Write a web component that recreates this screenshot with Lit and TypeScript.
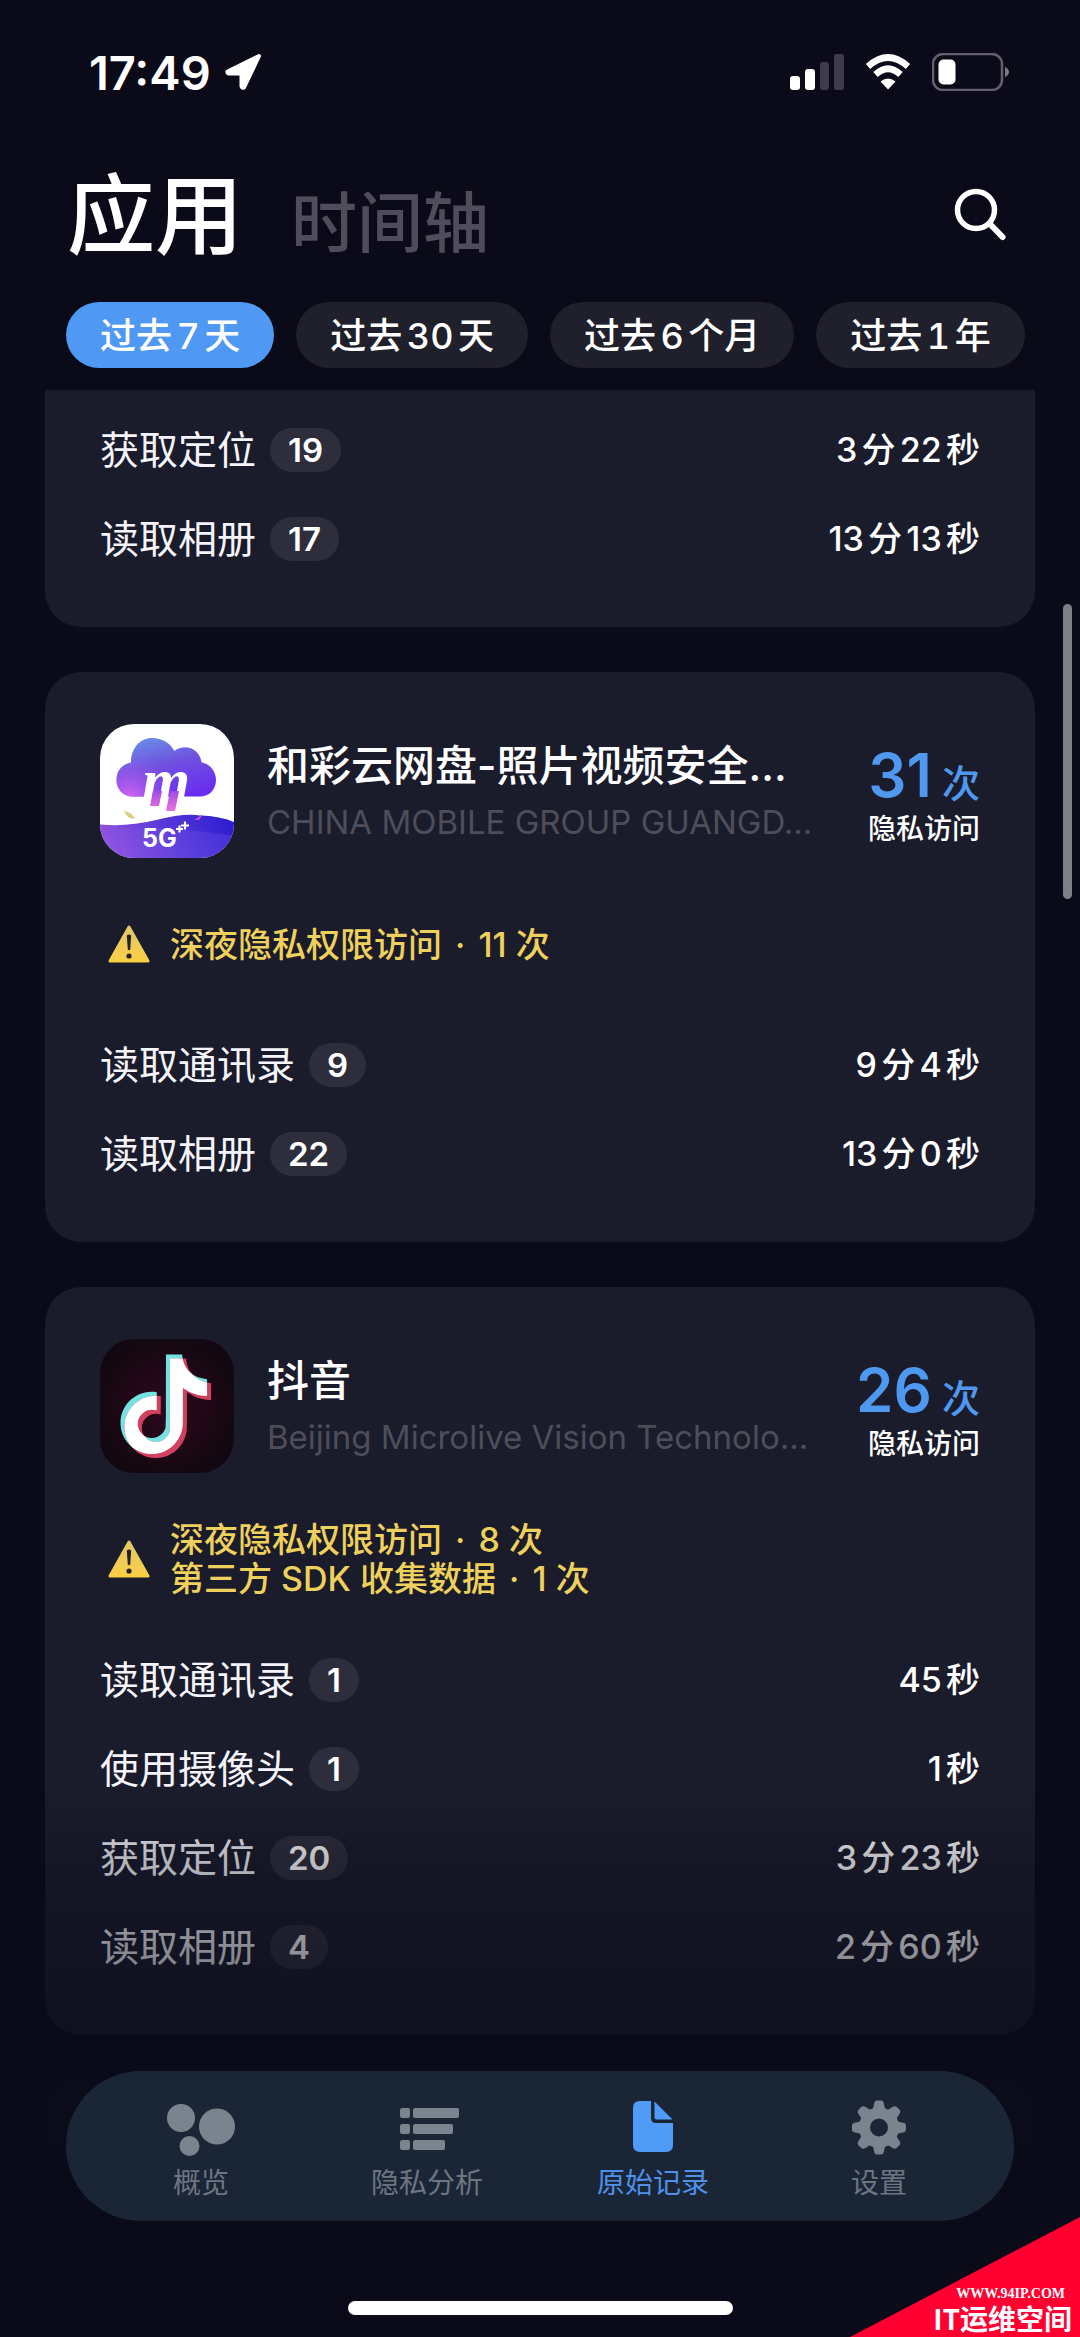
import { LitElement, html, svg, css, nothing } from "lit";
import { customElement, property, state } from "lit/decorators.js";
import { classMap } from "lit/directives/class-map.js";

interface Warning {
  text: string;
  times: number;
}

interface Access {
  name: string;
  count: number;
  time: string;
}

interface AppRecord {
  icon?: "cloud" | "note";
  name?: string;
  vendor?: string;
  total?: number;
  warnings: Warning[];
  accesses: Access[];
}

const PERIODS = ["过去7天", "过去30天", "过去6个月", "过去1年"];

const RECORDS: AppRecord[] = [
  {
    warnings: [],
    accesses: [
      { name: "获取定位", count: 19, time: "3分22秒" },
      { name: "读取相册", count: 17, time: "13分13秒" },
    ],
  },
  {
    icon: "cloud",
    name: "和彩云网盘-照片视频安全…",
    vendor: "CHINA MOBILE GROUP GUANGD…",
    total: 31,
    warnings: [{ text: "深夜隐私权限访问", times: 11 }],
    accesses: [
      { name: "读取通讯录", count: 9, time: "9分4秒" },
      { name: "读取相册", count: 22, time: "13分0秒" },
    ],
  },
  {
    icon: "note",
    name: "抖音",
    vendor: "Beijing Microlive Vision Technolo…",
    total: 26,
    warnings: [
      { text: "深夜隐私权限访问", times: 8 },
      { text: "第三方 SDK 收集数据", times: 1 },
    ],
    accesses: [
      { name: "读取通讯录", count: 1, time: "45秒" },
      { name: "使用摄像头", count: 1, time: "1秒" },
      { name: "获取定位", count: 20, time: "3分23秒" },
      { name: "读取相册", count: 4, time: "2分60秒" },
    ],
  },
];

const NOTE =
  "M12.525.02c1.31-.02 2.61-.01 3.91-.02.08 1.53.63 3.09 1.75 4.17 1.12 1.11 2.7 1.62 4.24 1.79v4.03c-1.44-.05-2.89-.35-4.2-.97-.57-.26-1.1-.59-1.62-.93-.01 2.92.01 5.84-.02 8.75-.08 1.4-.54 2.79-1.35 3.94-1.31 1.92-3.58 3.17-5.91 3.21-1.43.08-2.86-.31-4.08-1.03-2.02-1.19-3.44-3.37-3.65-5.71-.02-.5-.03-1-.01-1.49.18-1.9 1.12-3.72 2.58-4.96 1.66-1.44 3.98-2.13 6.15-1.72.02 1.48-.04 2.96-.04 4.44-.99-.32-2.15-.23-3.02.37-.63.41-1.11 1.04-1.36 1.75-.21.51-.15 1.07-.14 1.61.24 1.64 1.82 3.02 3.5 2.87 1.12-.01 2.19-.66 2.77-1.61.19-.33.4-.67.41-1.06.1-1.79.06-3.57.07-5.36.01-4.03-.01-8.05.02-12.07z";

const cloudIcon = html`<svg viewBox="0 0 134 134" aria-hidden="true">
  <defs>
    <linearGradient id="sky" x1="0.3" y1="0" x2="0.75" y2="1">
      <stop offset="0" stop-color="#6a8ae6" />
      <stop offset="0.45" stop-color="#6f50e0" />
      <stop offset="1" stop-color="#6a2cf0" />
    </linearGradient>
    <radialGradient id="glow" gradientUnits="userSpaceOnUse" cx="30" cy="76" r="46">
      <stop offset="0" stop-color="#dc6cf0" />
      <stop offset="1" stop-color="#a050f0" stop-opacity="0" />
    </radialGradient>
    <linearGradient id="hill" x1="0" y1="0.6" x2="1" y2="0.4">
      <stop offset="0" stop-color="#9a52dc" />
      <stop offset="0.5" stop-color="#5a3ad8" />
      <stop offset="1" stop-color="#2f1fd2" />
    </linearGradient>
    <linearGradient id="leg" x1="0" y1="0" x2="0" y2="1">
      <stop offset="0" stop-color="#a04ae4" />
      <stop offset="1" stop-color="#ea74dc" />
    </linearGradient>
    <clipPath id="tile"><rect width="134" height="134" rx="34" /></clipPath>
    <path
      id="cloud"
      d="M33 72.500C23 72.500 16.500 65 16.500 56C16.500 46 23 40 31 38.500C31 24 40 14 52 14C62 14 70 19 74.500 27C84 19 100 24 101.500 38.500C110 40 116 47 116 56C116 66 109 72.500 100 72.500Z"
    />
  </defs>
  <g clip-path="url(#tile)">
    <rect width="134" height="134" fill="#fff" />
    <use href="#cloud" fill="url(#sky)" />
    <use href="#cloud" fill="url(#glow)" />
    <path d="M24 87q8 1 11 8q-9 -1 -11 -8z" fill="#d8cf84" />
    <path d="M0 100.500Q28 103 56 96T100 91.500Q120 92 134 98V134H0Z" fill="url(#hill)" />
    <path d="M0 108Q40 98 134 112V134H0Z" fill="#7a5cf0" opacity="0.25" />
    <path d="M94 96l9 -6l-4 6z" fill="#c050d0" />
    <text x="42" y="77" font-family="Liberation Serif, serif" font-size="62" font-style="italic" font-weight="700" fill="#fff">m</text>
    <path d="M53 67h9l-3 15h-9zM70 67h9l-4 20h-9z" fill="url(#leg)" />
    <text x="42" y="123" font-family="Inter, sans-serif" font-size="25" font-weight="700" fill="#fff">5G</text>
    <path d="M76 105h7M79.500 101.500v7M81 101.500h8M85 97.500v8" stroke="#fff" stroke-width="2.200" />
  </g>
</svg>`;

const noteIcon = html`<svg viewBox="0 0 134 134" aria-hidden="true">
  <defs>
    <radialGradient id="dusk">
      <stop offset="0" stop-color="#2a0a1c" />
      <stop offset="0.6" stop-color="#210716" />
      <stop offset="1" stop-color="#130811" />
    </radialGradient>
    <clipPath id="shape"><path d=${NOTE} transform="translate(14 15.500) scale(4.150)" /></clipPath>
  </defs>
  <rect width="134" height="134" rx="34" fill="url(#dusk)" />
  <path d=${NOTE} transform="translate(14 15.500) scale(4.150)" fill="#74e2e2" />
  <path d=${NOTE} transform="translate(18 19.500) scale(4.150)" fill="#d2405f" />
  <g clip-path="url(#shape)">
    <path d=${NOTE} transform="translate(18 19.500) scale(4.150)" fill="#fff" />
  </g>
</svg>`;

const warningIcon = html`<svg viewBox="0 0 42 38" aria-hidden="true">
  <defs>
    <linearGradient id="amber" x1="0" y1="0" x2="0" y2="1">
      <stop offset="0" stop-color="#e2c66a" />
      <stop offset="1" stop-color="#f9cf45" />
    </linearGradient>
  </defs>
  <path d="M21 2L40 36H2Z" fill="url(#amber)" stroke="url(#amber)" stroke-width="3" stroke-linejoin="round" />
  <path d="M18.800 10.500q2.200 -2 4.400 0l-1 14q-1.200 1.400 -2.400 0z" fill="#23212a" />
  <circle cx="21" cy="31" r="2.600" fill="#23212a" />
</svg>`;

@customElement("record-card")
export class RecordCard extends LitElement {
  @property({ attribute: false }) record!: AppRecord;

  static styles = css`
    :host {
      display: block;
      flex: none;
      background: #1a1b2b;
      border-radius: 36px;
      padding: 52px 55px 66px;
    }
    :host(.cut) {
      border-top-left-radius: 0;
      border-top-right-radius: 0;
      padding-top: 38px;
    }
    .head {
      display: flex;
      align-items: center;
      gap: 33px;
    }
    .icon {
      flex: none;
      width: 134px;
      height: 134px;
    }
    .icon svg,
    .sign svg {
      display: block;
      width: 100%;
    }
    .names {
      flex: 1;
      min-width: 0;
      white-space: nowrap;
    }
    .name {
      margin: 0;
      font-size: 42px;
      line-height: 62px;
      font-weight: 500;
    }
    .vendor {
      font-size: 33px;
      line-height: 50px;
      color: #4e4e5a;
    }
    .total {
      flex: none;
      text-align: right;
    }
    .sum {
      font-size: 38px;
      line-height: 40px;
      font-weight: 500;
      color: #4f98f0;
    }
    .sum b {
      font-size: 60px;
      line-height: 76px;
      font-weight: 600;
    }
    .caption {
      font-size: 28px;
      line-height: 32px;
      font-weight: 500;
    }
    .warn {
      display: flex;
      align-items: center;
      gap: 20px;
      min-height: 78px;
      margin: 47px 0 60px;
      padding-left: 8px;
      font-size: 34px;
      line-height: 39px;
      font-weight: 500;
      color: #eed05c;
    }
    .dot {
      margin: 0 4px;
    }
    .sign {
      flex: none;
      width: 42px;
    }
    .rows {
      list-style: none;
      margin: 0;
      padding: 0;
      display: flex;
      flex-direction: column;
      gap: 45px;
    }
    .row {
      display: flex;
      align-items: center;
      height: 44px;
    }
    .label {
      font-size: 39px;
      line-height: 44px;
      color: #f4f4fa;
    }
    .badge {
      margin-left: 14px;
      padding: 0 18px;
      border-radius: 22px;
      background: #2e2d3c;
      font-size: 33px;
      line-height: 44px;
      font-weight: 600;
    }
    .time {
      margin-left: auto;
      font-size: 34px;
      line-height: 44px;
      font-weight: 500;
      text-autospace: normal;
    }
  `;

  render() {
    const r = this.record;
    return html`
      ${r.name
        ? html`<div class="head">
            <div class="icon">${r.icon === "cloud" ? cloudIcon : noteIcon}</div>
            <div class="names">
              <h2 class="name">${r.name}</h2>
              <div class="vendor">${r.vendor}</div>
            </div>
            <div class="total">
              <div class="sum"><b>${r.total}</b> 次</div>
              <div class="caption">隐私访问</div>
            </div>
          </div>`
        : nothing}
      ${r.warnings.length
        ? html`<div class="warn">
            <div class="sign">${warningIcon}</div>
            <div>
              ${r.warnings.map((w) => html`<div>${w.text} <span class="dot">·</span> ${w.times} 次</div>`)}
            </div>
          </div>`
        : nothing}
      <ul class="rows">
        ${r.accesses.map(
          (a) => html`<li class="row">
            <span class="label">${a.name}</span>
            <span class="badge">${a.count}</span>
            <span class="time">${a.time}</span>
          </li>`
        )}
      </ul>
    `;
  }
}

const TABS = [
  {
    label: "概览",
    icon: svg`<circle cx="14" cy="18" r="14"/><circle cx="50" cy="26.500" r="18"/><circle cx="22.500" cy="46" r="10"/>`,
  },
  {
    label: "隐私分析",
    icon: svg`<rect x="7" y="8" width="10" height="10" rx="2"/><rect x="20" y="8" width="46" height="10" rx="2"/><rect x="7" y="24" width="10" height="10" rx="2"/><rect x="20" y="24" width="40" height="10" rx="2"/><rect x="7" y="40" width="10" height="10" rx="2"/><rect x="20" y="40" width="32" height="10" rx="2"/>`,
  },
  {
    label: "原始记录",
    icon: svg`<path d="M21 1H32V18Q32 23 37 23H54V45Q54 52 47 52H21Q14 52 14 45V8Q14 1 21 1Z"/><path d="M35.500 1.500L53.500 19.500H37.500Q35.500 19.500 35.500 17.500Z"/>`,
  },
  {
    label: "设置",
    icon: svg`<circle cx="34" cy="27.500" r="14.500" fill="none" stroke="currentColor" stroke-width="11"/>${[
      0, 45, 90, 135, 180, 225, 270, 315,
    ].map(
      (a) =>
        svg`<path transform=${`rotate(${a} 34 27.5)`} d="M26 10.500Q28.500 9 29 4Q29.500 0.500 32 0.500H36Q38.500 0.500 39 4Q39.500 9 42 10.500Z"/>`
    )}`,
  },
];

@customElement("app-root")
export class AppRoot extends LitElement {
  @state() private period = 0;
  @state() private tab = 2;

  static styles = css`
    :host {
      display: flex;
      flex-direction: column;
      position: relative;
      height: 100vh;
      overflow: hidden;
      background: #0a0a18;
      color: #fff;
      font-family: Inter, "Noto Sans CJK SC", sans-serif;
    }
    button {
      border: 0;
      padding: 0;
      background: none;
      color: inherit;
      font: inherit;
      cursor: pointer;
    }
    svg {
      display: block;
    }
    .status {
      flex: none;
      display: flex;
      align-items: center;
      height: 144px;
      padding: 0 71px 0 89px;
    }
    .clock {
      font-size: 47px;
      font-weight: 600;
    }
    .arrow {
      width: 38px;
      margin-left: 13px;
    }
    .signals {
      display: flex;
      align-items: center;
      gap: 21px;
      margin-left: auto;
    }
    .bars {
      width: 54px;
    }
    .wifi {
      width: 46px;
    }
    .battery {
      width: 77px;
    }
    .header {
      flex: none;
      display: flex;
      align-items: center;
      justify-content: space-between;
      box-sizing: border-box;
      height: 138px;
      padding: 4px 72px 0 67px;
    }
    .views {
      display: flex;
      align-items: baseline;
      gap: 48px;
    }
    .view {
      font-size: 66px;
      font-weight: 500;
      color: #4f4d5b;
    }
    .view.current {
      font-size: 88px;
      line-height: 100px;
      color: #fff;
    }
    .search svg {
      width: 54px;
    }
    .periods {
      flex: none;
      display: flex;
      gap: 22px;
      margin: 20px 55px 22px 66px;
    }
    .chip {
      height: 66px;
      padding: 0 34px 4px;
      border-radius: 33px;
      background: #201f2c;
      font-size: 36px;
      font-weight: 500;
      font-variant-numeric: tabular-nums;
      white-space: nowrap;
      text-autospace: normal;
    }
    .chip.on {
      background: #4f98f3;
    }
    .list {
      flex: 1;
      min-height: 0;
      overflow-y: auto;
      scrollbar-width: none;
      display: flex;
      flex-direction: column;
      gap: 45px;
      padding: 0 45px;
    }
    .next {
      flex: none;
      height: 257px;
      border-radius: 36px 36px 0 0;
      background: #1a1b2b;
    }
    .thumb {
      position: absolute;
      top: 604px;
      right: 8px;
      width: 9px;
      height: 295px;
      border-radius: 5px;
      background: #7f7f88;
    }
    .dock {
      position: absolute;
      left: 0;
      right: 0;
      bottom: 0;
      display: flex;
      flex-direction: column;
      gap: 80px;
      padding: 281px 66px 22px;
      background: linear-gradient(
        rgba(10, 10, 24, 0),
        rgba(10, 10, 24, 0.26) 12%,
        rgba(10, 10, 24, 0.44) 28%,
        rgba(10, 10, 24, 0.6) 44%,
        rgba(10, 10, 24, 0.9) 53%,
        #0a0a18 75%
      );
      pointer-events: none;
    }
    .tabs {
      display: flex;
      height: 150px;
      padding: 0 22px;
      border-radius: 75px;
      background: #1a2635;
      pointer-events: auto;
    }
    .tab {
      flex: 1;
      display: flex;
      flex-direction: column;
      align-items: center;
      gap: 9px;
      padding-top: 29px;
      font-size: 28px;
      line-height: 36px;
      color: #6d7583;
      text-decoration: none;
    }
    .tab svg {
      width: 68px;
      fill: #7b838f;
      color: #7b838f;
    }
    .tab.on {
      color: #4f90ea;
    }
    .tab.on svg {
      fill: #4f9bf5;
    }
    .home {
      align-self: center;
      width: 385px;
      height: 14px;
      border-radius: 7px;
      background: #fff;
    }
    .ribbon {
      position: absolute;
      right: 0;
      bottom: 0;
      display: flex;
      flex-direction: column;
      justify-content: flex-end;
      align-items: flex-end;
      box-sizing: border-box;
      width: 230px;
      height: 120px;
      padding: 0 8px 2px 0;
      background: #ff0030;
      clip-path: polygon(100% 0, 100% 100%, 0 100%);
      font-weight: 700;
    }
    .site {
      padding-right: 7px;
      font-family: "Liberation Serif", serif;
      font-size: 14px;
      line-height: 14px;
    }
    .brand {
      font-family: "Noto Sans CJK SC", sans-serif;
      font-size: 28px;
      line-height: 34px;
    }
  `;

  render() {
    return html`
      <div class="status">
        <span class="clock">17:49</span>
        <svg class="arrow" viewBox="0 0 38 38" aria-hidden="true">
          <path d="M35 3L3.500 18.500Q3 20 5 20.500H17.500V33Q18 35.500 20 34.500Z" fill="#fff" stroke="#fff" stroke-width="4" stroke-linejoin="round" />
        </svg>
        <div class="signals">
          <svg class="bars" viewBox="0 0 54 36" aria-hidden="true">
            <rect y="22" width="10" height="14" rx="3" fill="#fff" />
            <rect x="15" y="15" width="10" height="21" rx="3" fill="#fff" />
            <rect x="30" y="8" width="9" height="28" rx="3" fill="#3e3c4a" />
            <rect x="44" width="10" height="36" rx="3" fill="#3e3c4a" />
          </svg>
          <svg class="wifi" viewBox="0 0 46 36" aria-hidden="true" fill="none" stroke="#fff" stroke-width="6.500">
            <path d="M3 12.500Q23 -5.500 43 12.500" />
            <path d="M10.500 20.500Q23 9 35.500 20.500" />
            <path d="M23 35.500L15.500 27.500Q23 21.500 30.500 27.500Z" fill="#fff" stroke="none" />
          </svg>
          <svg class="battery" viewBox="0 0 77 38" aria-hidden="true">
            <rect x="1" y="1" width="69" height="36" rx="10" fill="none" stroke="#625f6e" stroke-width="2.500" />
            <rect x="6.500" y="6.500" width="17" height="25" rx="5" fill="#fff" />
            <path d="M73 14Q77 16 77 19T73 24Z" fill="#7b7985" />
          </svg>
        </div>
      </div>

      <header class="header">
        <div class="views">
          <button class="view current">应用</button>
          <button class="view">时间轴</button>
        </div>
        <button class="search" aria-label="搜索">
          <svg viewBox="0 0 54 54" aria-hidden="true" fill="none" stroke="#fff" stroke-width="5.500" stroke-linecap="round">
            <circle cx="22" cy="22" r="18.500" />
            <path d="M36 36L48.500 49" stroke-width="6" />
          </svg>
        </button>
      </header>

      <div class="periods">
        ${PERIODS.map(
          (p, i) => html`<button
            class=${classMap({ chip: true, on: i === this.period })}
            @click=${() => (this.period = i)}
          >${p}</button>`
        )}
      </div>

      <main class="list">
        ${RECORDS.map((r) => html`<record-card class=${r.name ? "" : "cut"} .record=${r}></record-card>`)}
        <div class="next"></div>
      </main>
      <div class="thumb"></div>

      <div class="dock">
        <nav class="tabs">
          ${TABS.map(
            (t, i) => html`<a
              href="#"
              class=${classMap({ tab: true, on: i === this.tab })}
              @click=${(e: Event) => {
                e.preventDefault();
                this.tab = i;
              }}
            >
              <svg viewBox="0 0 68 56" aria-hidden="true">${t.icon}</svg>
              <span>${t.label}</span>
            </a>`
          )}
        </nav>
        <div class="home"></div>
      </div>

      <div class="ribbon">
        <span class="site">WWW.94IP.COM</span>
        <span class="brand">IT运维空间</span>
      </div>
    `;
  }
}
